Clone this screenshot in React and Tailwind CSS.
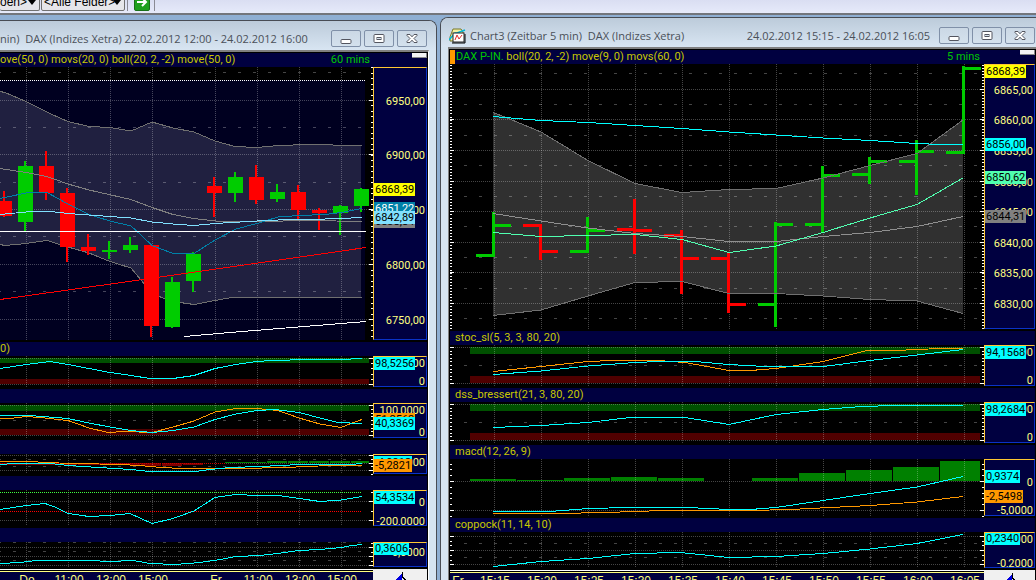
import React from "react";

const leftTimes = [
  { x: 26, text: "Do" },
  { x: 68, text: "11:00" },
  { x: 110, text: "13:00" },
  { x: 152, text: "15:00" },
  { x: 215, text: "Fr" },
  { x: 257, text: "11:00" },
  { x: 299, text: "13:00" },
  { x: 341, text: "15:00" },
];

const rightTimes = [
  { x: 457, text: "Fr", noGrid: true },
  { x: 494, text: "15:15" },
  { x: 541, text: "15:20" },
  { x: 588, text: "15:25" },
  { x: 635, text: "15:30" },
  { x: 682, text: "15:35" },
  { x: 729, text: "15:40" },
  { x: 776, text: "15:45" },
  { x: 823, text: "15:50" },
  { x: 870, text: "15:55" },
  { x: 917, text: "16:00" },
  { x: 964, text: "16:05" },
];

// up, body top, body bottom, wick top, wick bottom
const candles = [
  [0, 201, 216, 191, 217],
  [1, 166, 222, 161, 231],
  [0, 166, 193, 151, 200],
  [0, 193, 247, 188, 262],
  [0, 247, 251, 234, 255],
  [1, 250, 252, 241, 259],
  [1, 245, 250, 237, 253],
  [0, 245, 326, 245, 337],
  [1, 282, 327, 277, 328],
  [1, 254, 281, 252, 292],
  [0, 186, 193, 177, 217],
  [1, 177, 193, 172, 202],
  [0, 177, 200, 165, 204],
  [1, 192, 199, 184, 202],
  [0, 192, 210, 185, 219],
  [0, 210, 213, 208, 230],
  [1, 206, 213, 205, 235],
  [1, 189, 206, 188, 212],
];

// up, high, low, open, close
const bars = [
  [1, 212, 257, 254, 224],
  [0, 224, 260, 224, 250],
  [1, 217, 253, 250, 229],
  [0, 199, 254, 228, 229],
  [0, 230, 294, 234, 257],
  [0, 253, 313, 257, 303],
  [1, 222, 327, 303, 223],
  [1, 166, 232, 223, 174],
  [1, 157, 184, 173, 160],
  [1, 140, 195, 160, 150],
  [1, 66, 154, 151, 67],
];

const leftFrame = { x: 0, width: 373, from: 0, dashFrom: -2, bandFrom: 0, bandTo: 369 };
const rightFrame = { x: 450, width: 534, from: 451, dashFrom: 464, bandFrom: 470, bandTo: 980 };

const upColor = "#00cc00";
const downColor = "#ff0000";

function Line({ points, color }) {
  return <polyline points={points} fill="none" stroke={color} />;
}

function Bands({ frame, top, bottom, size }) {
  const width = frame.bandTo - frame.bandFrom;
  return (
    <>
      <rect x={frame.bandFrom} y={top} width={width} height={size} fill="#005000" />
      <rect x={frame.bandFrom} y={bottom - size} width={width} height={size} fill="#500000" />
    </>
  );
}

function Grid({ frame, times, top, height, dotted, dashed }) {
  const right = frame.x + frame.width;
  return (
    <g stroke="#ffffff" strokeOpacity="0.27">
      {times
        .filter((t) => !t.noGrid)
        .map((t) => (
          <line key={t.x} x1={t.x + 0.5} x2={t.x + 0.5} y1={top} y2={top + height - 2} strokeDasharray="1 1" />
        ))}
      {dotted.map((y) => (
        <line key={y} x1={frame.from} x2={right - 4} y1={y + 0.5} y2={y + 0.5} strokeDasharray="1 1" />
      ))}
      {dashed.map((y) => (
        <line key={y} x1={frame.dashFrom} x2={right - 4} y1={y + 0.5} y2={y + 0.5} strokeDasharray="3 12" />
      ))}
    </g>
  );
}

function Ticks({ frame, top, height, dotted, step }) {
  const right = frame.x + frame.width;
  const bothSides = frame.x > 0;
  const minor = [];
  for (let y = dotted[0]; y >= top; y -= step) minor.push(Math.round(y));
  for (let y = dotted[0] + step; y < top + height - 2; y += step) minor.push(Math.round(y));
  return (
    <g fill="#ffffff">
      {minor.map((y) => (
        <React.Fragment key={y}>
          <rect x={right - 2} y={y} width="2" height="1" />
          {bothSides && <rect x={frame.x} y={y} width="2" height="1" />}
        </React.Fragment>
      ))}
      {dotted.map((y) => (
        <React.Fragment key={y}>
          <rect x={right - 4} y={y} width="4" height="1" />
          {bothSides && <rect x={frame.x} y={y} width="4" height="1" />}
        </React.Fragment>
      ))}
    </g>
  );
}

function Panel({ frame, times, heightClass, axisClass, top, height, dotted, dashed = [], step, labels, badges, under, children }) {
  return (
    <div className={`flex bg-black ${heightClass}`}>
      <svg
        className="block h-full min-w-0 flex-1"
        viewBox={`${frame.x} ${top} ${frame.width} ${height}`}
        preserveAspectRatio="none"
        shapeRendering="crispEdges"
      >
        {under}
        <Grid frame={frame} times={times} top={top} height={height} dotted={dotted} dashed={dashed} />
        {children}
        <Ticks frame={frame} top={top} height={height} dotted={dotted} step={step} />
      </svg>
      <div
        className={`relative mb-[2px] shrink-0 overflow-hidden border border-t-[#ffc832] border-r-[#0a32c8] border-b-[#0a32c8] border-l-[#ffc832] bg-[#000040] ${axisClass}`}
      >
        {labels.map(([y, text]) => (
          <span
            key={text + y}
            className="absolute right-px text-[11px] leading-[13px] text-[#ffff80]"
            style={{ top: y - top - 7 }}
          >
            {text}
          </span>
        ))}
        {badges.map(([y, text, color]) => (
          <span
            key={text}
            className={`absolute left-0 h-[13px] px-px text-[11px] leading-[13px] ${color}`}
            style={{ top: y - top - 1 }}
          >
            {text}
          </span>
        ))}
      </div>
    </div>
  );
}

function PanelHeader({ children }) {
  return (
    <div className="flex h-[14px] items-center overflow-hidden bg-[#000040] pl-[5px] text-[11px] leading-[14px] whitespace-pre text-[#c8c800]">
      {children}
    </div>
  );
}

function TimeAxis({ frame, times, axisClass }) {
  return (
    <div className="flex h-8 bg-black">
      <div className="min-w-0 flex-1 border-t border-white pt-px">
        <div className="relative h-full border-t border-[#ffff80] bg-[#000040]">
          {times.map((t) => (
            <span
              key={t.x}
              className="absolute top-px -translate-x-1/2 font-['Liberation_Sans',sans-serif] text-xs leading-[14px] text-[#ffff80]"
              style={{ left: `${((t.x + 1 - frame.x) / frame.width) * 100}%` }}
            >
              {t.text}
            </span>
          ))}
        </div>
      </div>
      <div className={`flex shrink-0 justify-center bg-[#f0f0f0] pt-[3px] ${axisClass}`}>
        <svg width="16" height="16" viewBox="0 0 16 16" shapeRendering="crispEdges">
          <path d="M2 9L10 1V16H6V9Z" fill="#0000e0" />
          <path d="M10.5 0V5L14 8.5" fill="none" stroke="#000" />
        </svg>
      </div>
    </div>
  );
}

function WindowButtons() {
  const base =
    "flex h-[17px] w-[30px] shrink-0 items-center justify-center rounded-[2px] border border-[#8090a8] bg-gradient-to-b from-[#cbd8e5] to-[#d4e1ed]";
  return (
    <div className="flex gap-[3px]">
      <button type="button" aria-label="Minimize" className={base}>
        <svg width="12" height="12" viewBox="0 0 12 12">
          <rect x="1" y="6.5" width="10" height="4" rx="1" fill="#fff" stroke="#53555f" />
        </svg>
      </button>
      <button type="button" aria-label="Maximize" className={base}>
        <svg width="12" height="12" viewBox="0 0 12 12">
          <rect x="1" y="1.5" width="10" height="8" rx="1" fill="#fff" stroke="#53555f" />
          <rect x="4" y="4.5" width="4" height="2" fill="#d4e1ed" stroke="#53555f" />
        </svg>
      </button>
      <button type="button" aria-label="Close" className={base}>
        <svg width="12" height="12" viewBox="0 0 12 12">
          <path
            d="M1 1.5H4L6 3.8L8 1.5H11V2.5L8 5.5L11 8.5V9.5H8L6 7.2L4 9.5H1V8.5L4 5.5L1 2.5Z"
            fill="#fff"
            stroke="#53555f"
          />
        </svg>
      </button>
    </div>
  );
}

function Grip() {
  return <span className="mb-auto h-[5px] w-[15px] shrink-0 border-r border-b border-[#888] bg-[#f4f4f4]" />;
}

function Arrow() {
  return (
    <svg className="pointer-events-none absolute top-[7px] right-[4px]" width="8" height="5">
      <path d="M0 0H8L4 5Z" />
    </svg>
  );
}

function Toolbar() {
  const select =
    "block h-[18px] appearance-none rounded-[2px] border border-[#707070] bg-[#e6e6ea] font-['Liberation_Sans',sans-serif] text-xs leading-4 text-black";
  return (
    <div className="flex h-[13px] shrink-0 items-end overflow-hidden bg-gradient-to-b from-[#dadef2] to-[#e6eafa] pb-[2px]">
      <div className="relative">
        <select aria-label="Gruppe" className={`${select} w-10 border-l-0`}>
          <option>oen&gt;</option>
        </select>
        <Arrow />
      </div>
      <div className="relative ml-px">
        <select aria-label="Felder" className={`${select} w-[84px] pl-[2px]`}>
          <option>&lt;Alle Felder&gt;</option>
        </select>
        <Arrow />
      </div>
      <div className="ml-[2px] h-4 w-px bg-[#8a8a94]" />
      <button type="button" aria-label="Start" className="ml-[6px]">
        <svg className="block" width="16" height="16" viewBox="0 0 16 16">
          <rect x="0.5" y="0.5" width="15" height="15" rx="1.5" fill="#1ea01e" stroke="#187018" />
          <path d="M3 7H12M8 3L12 7L8 11" fill="none" stroke="#fff" strokeWidth="2" />
        </svg>
      </button>
      <div className="ml-1 h-4 w-px bg-[#8a8a94]" />
    </div>
  );
}

function LeftWindow() {
  const shared = { frame: leftFrame, times: leftTimes, axisClass: "w-[54px]" };
  return (
    <section className="mt-[5px] min-w-0 overflow-hidden rounded-tr-lg border-t border-r border-[#484c54] bg-[#d6e4f1]">
      <div className="flex h-[29px] items-center justify-between bg-gradient-to-b from-[#bccbda] to-[#d8e5f2] pt-[6px] pr-[9px] text-[#4a5058]">
        <h2 className="font-['Open_Sans',sans-serif] text-[11px] leading-4 whitespace-pre">
          nin)  DAX (Indizes Xetra) 22.02.2012 12:00 - 24.02.2012 16:00
        </h2>
        <WindowButtons />
      </div>
      <div className="mr-[7px] border-t-2 border-r border-t-[#808080] border-r-white bg-black pt-px pr-px">
        <div className="flex h-[14px] items-center bg-[#000040] text-[11px] leading-[14px] whitespace-pre text-[#c8c800]">
          <span>ove(50, 0) movs(20, 0) boll(20, 2, -2) move(50, 0)</span>
          <span className="ml-auto pr-[42px] text-[#00c800]">60 mins</span>
          <span className="flex h-full">
            <Grip />
          </span>
        </div>
        <Panel
          {...shared}
          heightClass="h-[275px]"
          top={67}
          height={275}
          dotted={[100, 154, 209, 264, 319]}
          dashed={[72, 127, 182, 236, 291]}
          step={5.48}
          labels={[
            [101, "6950,00"],
            [155, "6900,00"],
            [210, "6850,00"],
            [265, "6800,00"],
            [320, "6750,00"],
          ]}
          badges={[
            [183, "6868,39", "bg-[#ffff00] text-black"],
            [202, "6851,22", "bg-[#0080a8] text-white"],
            [215, "6838,84", "bg-[#808080] text-black"],
            [211, "6842,89", "bg-[#80e0ff] text-black"],
          ]}
          under={
            <>
              <rect x="0" y="80" width="365" height="260" fill="#000020" />
              <polygon
                fill="#202040"
                points="0,91 5,92 26,101 52,114 68,121 89,126 110,127 131,131 152,122 173,128 194,132 215,141 235,146 257,147 278,145 309,144 325,144 341,145 361,145 361,297 232,297 215,300 194,304 173,301 152,294 141,280 131,268 110,261 89,253 68,247 47,240 26,243 5,245 0,244"
              />
            </>
          }
        >
          <line x1="0" x2="365" y1="80.5" y2="80.5" stroke="#fff" strokeDasharray="1 1" />
          <Line
            color="#707070"
            points="0,91.5 5,92.5 26,101.5 52,114.5 68,121.5 89,126.5 110,127.5 131,131 152,122 173,128 194,132 215,141 235,146.5 257,147.5 278,145.5 309,144.5 325,144.5 341,145.5 362,145.5"
          />
          <Line
            color="#707070"
            points="0,244.5 5,245.5 26,243.5 47,240.5 68,247 89,253 110,261.5 131,268 141,280 152,294 173,301.5 194,304.5 215,300.5 232,297.5 362,297.5"
          />
          {candles.map(([up, top, bottom, high, low], i) => (
            <g key={i} fill={up ? upColor : downColor}>
              <rect x={3 + i * 21} y={high} width="2" height={low - high} />
              <rect x={i * 21 - 3} y={top} width="15" height={bottom - top} />
            </g>
          ))}
          <Line
            color="#808080"
            points="0,168.5 26,172.5 47,176.5 68,184 89,190 131,199.5 152,207.5 173,214.5 194,218.5 220,221.5 257,221.5 310,220.5 362,221.5"
          />
          <Line
            color="#0080a8"
            points="0,198.5 26,193 47,192.5 68,204 89,214.5 110,221 131,226 141,235 152,245.5 173,253.5 194,253.5 215,240 236,229 257,223.5 278,217 299,215.5 325,214.5 341,212.5 362,208.5"
          />
          <Line
            color="#80e0ff"
            points="0,214.5 26,212 50,211.5 68,213.5 89,215 110,216.5 131,218 152,222 173,224 194,225.5 215,223.5 257,221 278,220 310,219.5 341,218.5 362,217.5"
          />
          <line x1="0" x2="366" y1="231.5" y2="231.5" stroke="#fff" />
          <Line color="#ff0000" points="0,299.5 143,279.5 220,268.5 366,247.5" />
          <Line color="#ffffff" points="184,336.5 230,332.5 366,321.5" />
        </Panel>

        <div className="flex h-[14px] items-center bg-[#000040] text-[11px] leading-[14px] text-[#c8c800]">0)</div>
        <Panel
          {...shared}
          heightClass="h-[33px]"
          top={356}
          height={33}
          dotted={[358, 384]}
          step={5.2}
          labels={[
            [363, "100,0000"],
            [381, "0"],
          ]}
          badges={[[357, "98,5256", "bg-[#00ffff] text-black"]]}
          under={<Bands frame={leftFrame} top={358} bottom={384} size={5} />}
        >
          <Line
            color="#00ffff"
            points="0,368.5 26,364.5 42,362.5 50,361.5 68,364.5 89,368.5 110,372.5 131,375.5 150,378.5 173,378.5 194,375.5 215,368.5 236,364.5 257,361.5 272,360.5 309,359.5 350,359.5 352,358.5 362,358.5"
          />
        </Panel>

        <PanelHeader />
        <Panel
          {...shared}
          heightClass="h-[37px]"
          top={403}
          height={37}
          dotted={[405, 435]}
          dashed={[420]}
          step={3.75}
          labels={[
            [410, "100,0000"],
            [432, "0"],
          ]}
          badges={[
            [413, "51,2563", "bg-[#ff9800] text-black"],
            [417, "40,3369", "bg-[#00ffff] text-black"],
          ]}
          under={<Bands frame={leftFrame} top={405} bottom={435} size={6} />}
        >
          <Line
            color="#ff9800"
            points="0,418.5 10,418.5 26,416.5 40,417.5 68,420.5 89,428 108,432.5 125,431.5 152,432.5 173,427 194,421 215,412 236,408.5 257,408.5 278,410.5 299,418 320,424 341,427.5 352,423 362,419.5"
          />
          <Line
            color="#00ffff"
            points="0,415.5 30,415.5 68,418.5 89,423 110,427 131,430.5 152,432.5 173,430.5 194,427 215,419.5 236,414 257,410.5 275,409.5 299,412.5 320,418 338,422.5 362,423.5"
          />
        </Panel>

        <PanelHeader />
        <Panel
          {...shared}
          heightClass="h-[22px]"
          top={454}
          height={22}
          dotted={[455, 463, 470]}
          dashed={[459, 466]}
          step={3.75}
          labels={[[462, "10,0000"]]}
          badges={[
            [456, "-4,9812", "bg-[#00ffff] text-black"],
            [459, "-5,2821", "bg-[#ff9800] text-black"],
          ]}
          under={
            <>
              <path d="M0 463H56V465H0ZM57 463H77V465H57ZM78 463H140V465H78ZM141 463H161V466H141ZM162 463H182V466H162ZM183 463H203V465H183Z" fill="#800000" />
              <path d="M225 462H266V463H225ZM267 461H287V463H267ZM288 461H308V463H288ZM309 461H329V463H309ZM330 461H350V463H330ZM351 461H369V463H351Z" fill="#008000" />
            </>
          }
        >
          <line x1="0" x2="225" y1="463.5" y2="463.5" stroke="#c80000" strokeDasharray="1 1" />
          <Line
            color="#ff9800"
            points="0,461.5 36,461.5 40,462.5 78,463.5 120,464.5 140,465.5 161,467.5 182,468.5 215,468.5 240,468.5 285,467.5 330,465.5 362,465.5"
          />
          <Line
            color="#00ffff"
            points="0,464.5 15,463.5 50,463.5 68,465.5 99,467.5 131,469.5 150,471.5 165,471.5 195,471.5 210,469.5 230,467.5 260,466.5 300,464.5 350,464.5 362,463.5"
          />
        </Panel>

        <PanelHeader />
        <Panel
          {...shared}
          heightClass="h-[38px]"
          top={490}
          height={38}
          dotted={[501, 520]}
          step={9.5}
          labels={[
            [502, "0"],
            [521, "-200,0000"],
          ]}
          badges={[[491, "54,3534", "bg-[#00ffff] text-black"]]}
        >
          <line x1="0" x2="362" y1="492.5" y2="492.5" stroke="#40ff40" strokeDasharray="1 1" />
          <line x1="0" x2="362" y1="511.5" y2="511.5" stroke="#ff0000" strokeDasharray="1 1" />
          <Line
            color="#00ffff"
            points="0,509.5 26,505.5 45,503.5 55,507 68,513.5 89,516.5 110,515.5 130,513.5 140,518 152,523.5 173,518.5 194,511 215,497.5 236,494.5 257,495.5 278,495.5 299,498.5 320,501.5 341,500 362,496.5"
          />
        </Panel>

        <PanelHeader />
        <Panel
          {...shared}
          heightClass="h-[27px]"
          top={542}
          height={27}
          dotted={[547, 556, 565]}
          dashed={[542, 551, 560]}
          step={4.5}
          labels={[[552, "0,0000"]]}
          badges={[[542, "0,3606", "bg-[#00ffff] text-black"]]}
        >
          <Line
            color="#00ffff"
            points="0,563.5 20,562.5 36,560.5 90,560.5 110,561.5 133,560.5 150,563.5 175,564.5 200,562.5 220,559.5 236,556.5 260,555.5 278,553.5 299,550.5 320,549.5 341,547.5 352,545.5 362,544.5"
          />
        </Panel>
        <TimeAxis {...shared} />
      </div>
    </section>
  );
}

function ChartIcon() {
  return (
    <svg className="mr-1 shrink-0" width="17" height="16" viewBox="0 0 17 16">
      <path d="M1 9L4 1H12L14 4V13H1Z" fill="#f4f0a0" stroke="#77762c" />
      <path d="M0 12L6 5H8L16 2" fill="none" stroke="#00b8d8" strokeWidth="1.5" />
      <rect x="4" y="5" width="11" height="9" fill="#fff" stroke="#222" />
      <path d="M6 12L8 7L10 11L13 7" fill="none" stroke="#e03030" />
      <path d="M3 15H16V6" fill="none" stroke="#000" />
    </svg>
  );
}

function RightWindow() {
  const shared = { frame: rightFrame, times: rightTimes, axisClass: "w-[51px]" };
  return (
    <section className="mt-[2px] min-w-0 overflow-hidden rounded-tl-lg border-t border-l border-[#484c54] bg-[#d6e4f1]">
      <div className="flex h-[29px] items-center bg-gradient-to-b from-[#bccbda] to-[#d8e5f2] pt-[6px] pr-px pl-2 text-[#4a5058]">
        <ChartIcon />
        <h2 className="min-w-0 flex-1 overflow-hidden font-['Open_Sans',sans-serif] text-[11px] leading-4 whitespace-pre">
          Chart3 (Zeitbar 5 min)  DAX (Indizes Xetra)
        </h2>
        <span className="pr-[9px] font-['Open_Sans',sans-serif] text-[11px] leading-4 whitespace-nowrap">
          24.02.2012 15:15 - 24.02.2012 16:05
        </span>
        <WindowButtons />
      </div>
      <div className="ml-[7px] border-t-2 border-l border-[#808080] bg-black pt-px pr-px pl-px">
        <div className="flex h-[14px] items-center bg-[#000040] text-[11px] leading-[14px] whitespace-pre text-[#c8c800]">
          <span className="mr-px h-full w-[5px] bg-[#ff9800]" />
          <span className="text-[#00c800]">DAX P-IN. </span>
          <span>boll(20, 2, -2) move(9, 0) movs(60, 0)</span>
          <span className="ml-auto pr-[40px] text-[#00c800]">5 mins</span>
          <span className="flex h-full">
            <Grip />
          </span>
        </div>
        <Panel
          {...shared}
          heightClass="h-[267px]"
          top={64}
          height={267}
          dotted={[89, 119, 150, 181, 211, 242, 272, 303]}
          dashed={[73, 104, 135, 165, 196, 226, 257, 288, 318]}
          step={3.06}
          labels={[
            [90, "6865,00"],
            [120, "6860,00"],
            [151, "6855,00"],
            [182, "6850,00"],
            [212, "6845,00"],
            [243, "6840,00"],
            [273, "6835,00"],
            [304, "6830,00"],
          ]}
          badges={[
            [65, "6868,39", "bg-[#ffff00] text-black"],
            [138, "6856,00", "bg-[#00ffff] text-black"],
            [171, "6850,62", "bg-[#50ffb0] text-black"],
            [210, "6844,31", "bg-[#808080] text-black"],
          ]}
          under={
            <polygon
              fill="#303030"
              points="493,112 511,119 541,132 588,160 635,183 682,192 729,189 776,188 823,178 870,165 917,153 930,144 963,120 963,313 917,301 870,299 823,296 776,293 729,293 682,281 635,282 588,296 541,310 493,315"
            />
          }
        >
          {bars.map(([up, high, low, open, close], i) => (
            <g key={i} fill={up ? upColor : downColor}>
              <rect x={492 + i * 47} y={high} width="3" height={low - high} />
              <rect x={476 + i * 47} y={open} width="16" height="3" />
              <rect x={495 + i * 47} y={close} width="16" height="3" />
            </g>
          ))}
          <Line
            color="#707070"
            points="493,112.5 511,119.5 541,132 588,160.5 635,183.5 682,192.5 729,189.5 776,188.5 823,178 870,165.5 917,153.5 930,144 963,120"
          />
          <Line
            color="#707070"
            points="493,315.5 541,310 588,296 635,282.5 682,281.5 729,293.5 776,293.5 823,296 870,299.5 917,301 963,313.5"
          />
          <Line
            color="#909090"
            points="493,213.5 541,221 588,228 635,233.5 682,236.5 729,241.5 776,241.5 823,236.5 870,232.5 917,226.5 963,216.5"
          />
          <Line
            color="#50ffb0"
            points="493,232.5 541,236.5 588,235.5 635,234.5 682,239.5 729,252.5 776,246 823,232.5 870,218 917,204.5 963,178"
          />
          <Line
            color="#00ffff"
            points="493,116.5 541,120.5 588,122.5 635,125.5 682,128.5 729,132 776,135 823,138 870,140.5 917,143.5 940,144.5 963,144.5"
          />
        </Panel>

        <PanelHeader>stoc_sl(5, 3, 3, 80, 20)</PanelHeader>
        <Panel
          {...shared}
          heightClass="h-[43px]"
          top={345}
          height={43}
          dotted={[347, 383]}
          dashed={[365]}
          step={3.6}
          labels={[
            [352, "100,0000"],
            [380, "0"],
          ]}
          badges={[[346, "94,1568", "bg-[#00ffff] text-black"]]}
          under={<Bands frame={rightFrame} top={347} bottom={383} size={7} />}
        >
          <Line
            color="#ff9800"
            points="493,371.5 541,366.5 588,361.5 612,360.5 658,360.5 685,362.5 729,370.5 750,370.5 776,368.5 823,361.5 865,351 895,350.5 940,348.5 963,348.5"
          />
          <Line
            color="#00ffff"
            points="493,374.5 541,371 588,366 635,362.5 660,361.5 695,361.5 729,364.5 765,366.5 823,366.5 870,360.5 917,355 963,349.5"
          />
        </Panel>

        <PanelHeader>dss_bressert(21, 3, 80, 20)</PanelHeader>
        <Panel
          {...shared}
          heightClass="h-[43px]"
          top={402}
          height={43}
          dotted={[404, 440]}
          dashed={[422]}
          step={3.6}
          labels={[
            [409, "100,0000"],
            [437, "0"],
          ]}
          badges={[[403, "98,2684", "bg-[#00ffff] text-black"]]}
          under={<Bands frame={rightFrame} top={404} bottom={440} size={7} />}
        >
          <Line
            color="#00ffff"
            points="493,427.5 541,425.5 588,422.5 630,417.5 685,417.5 729,424.5 776,414.5 823,409.5 862,406.5 895,405.5 963,405.5"
          />
        </Panel>

        <PanelHeader>macd(12, 26, 9)</PanelHeader>
        <Panel
          {...shared}
          heightClass="h-[59px]"
          top={459}
          height={59}
          dotted={[481, 510]}
          step={5.8}
          labels={[
            [482, "0"],
            [510, "-5,0000"],
          ]}
          badges={[
            [470, "0,9374", "bg-[#00ffff] text-black"],
            [490, "-2,5498", "bg-[#ff9800] text-black"],
          ]}
          under={
            <g fill="#008000">
              {[2, 1, 3, 4, 3, 0, 3, 8, 11, 14, 20].map((size, i) => (
                <rect key={i} x={470 + i * 47} y={481 - size} width={i === 10 ? 40 : 46} height={size} />
              ))}
            </g>
          }
        >
          <Line
            color="#ff9800"
            points="493,513.5 562,513.5 640,511.5 658,510.5 750,510.5 790,509.5 870,505.5 917,502 963,496.5"
          />
          <Line
            color="#00ffff"
            points="493,511.5 550,511.5 588,508.5 630,507.5 688,507.5 729,509.5 750,509.5 776,507.5 823,500.5 870,493.5 917,487 963,476.5"
          />
        </Panel>

        <PanelHeader>coppock(11, 14, 10)</PanelHeader>
        <Panel
          {...shared}
          heightClass="h-[38px]"
          top={532}
          height={38}
          dotted={[536, 550, 564]}
          dashed={[543, 557]}
          step={4.7}
          labels={[
            [539, "0,0000"],
            [563, "-0,2000"],
          ]}
          badges={[[532, "0,2340", "bg-[#00ffff] text-black"]]}
        >
          <Line
            color="#00ffff"
            points="493,566.5 541,561.5 588,558.5 635,553.5 680,552.5 729,557.5 776,556.5 823,553.5 870,549 917,543.5 963,534.5"
          />
        </Panel>
        <TimeAxis {...shared} />
      </div>
    </section>
  );
}

function App() {
  return (
    <main className="flex h-screen flex-col overflow-hidden bg-[#8fafd3] font-[Roboto,'Liberation_Sans',sans-serif]">
      <Toolbar />
      <div className="grid min-h-0 flex-1 grid-cols-[437fr_596fr] gap-[3px] border-t-2 border-[#73767c]">
        <LeftWindow />
        <RightWindow />
      </div>
    </main>
  );
}

export default App;
